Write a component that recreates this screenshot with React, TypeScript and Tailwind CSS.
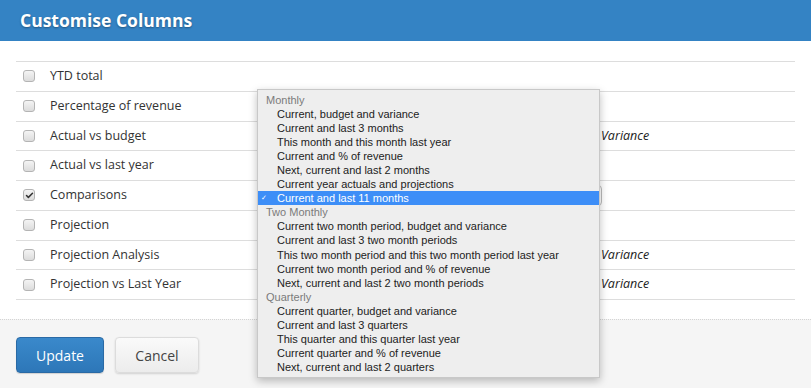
import { Check } from 'lucide-react';

interface ColumnRow {
  label: string;
  checked?: boolean;
  value?: string;
  select?: boolean;
}

const rows: ColumnRow[] = [
  { label: 'YTD total' },
  { label: 'Percentage of revenue' },
  { label: 'Actual vs budget', value: 'Variance' },
  { label: 'Actual vs last year' },
  { label: 'Comparisons', checked: true, select: true },
  { label: 'Projection' },
  { label: 'Projection Analysis', value: 'Variance' },
  { label: 'Projection vs Last Year', value: 'Variance' },
];

interface OptionGroup {
  title: string;
  options: string[];
}

const groups: OptionGroup[] = [
  {
    title: 'Monthly',
    options: [
      'Current, budget and variance',
      'Current and last 3 months',
      'This month and this month last year',
      'Current and % of revenue',
      'Next, current and last 2 months',
      'Current year actuals and projections',
      'Current and last 11 months',
    ],
  },
  {
    title: 'Two Monthly',
    options: [
      'Current two month period, budget and variance',
      'Current and last 3 two month periods',
      'This two month period and this two month period last year',
      'Current two month period and % of revenue',
      'Next, current and last 2 two month periods',
    ],
  },
  {
    title: 'Quarterly',
    options: [
      'Current quarter, budget and variance',
      'Current and last 3 quarters',
      'This quarter and this quarter last year',
      'Current quarter and % of revenue',
      'Next, current and last 2 quarters',
    ],
  },
];

const selected = 'Current and last 11 months';

function Checkbox({ checked = false }: { checked?: boolean }) {
  return (
    <span className="flex h-[12px] w-[12px] items-center justify-center rounded-[3px] border border-[#b4b4b4] bg-gradient-to-b from-[#f4f4f4] to-[#dcdcdc]">
      {checked && <Check className="h-[9px] w-[9px] text-[#333]" strokeWidth={4} />}
    </span>
  );
}

export default function App() {
  return (
    <div className="relative h-[388px] w-[811px] overflow-hidden bg-white font-['Open_Sans',sans-serif] text-[#333]">
      {/* Header */}
      <div className="flex h-[41px] items-center bg-[#3483c4] px-[20px]">
        <h1 className="text-[17.5px] font-bold text-white [text-shadow:0_1px_2px_rgba(0,0,0,0.35)]">
          Customise Columns
        </h1>
      </div>

      {/* Column list */}
      <div className="px-[16px] pt-[20px]">
        {rows.map((row) => (
          <div
            key={row.label}
            className="flex h-[29.75px] items-center border-t border-[#dddddd] text-[12.5px]"
          >
            <div className="flex w-[34px] pl-[7px]">
              <Checkbox checked={row.checked} />
            </div>
            <div className="flex w-[551px] items-center justify-between">
              <span>{row.label}</span>
              {row.select && (
                <div className="mr-[-1px] h-[21px] w-[182px] rounded-[4px] border border-[#bbb] bg-white" />
              )}
            </div>
            <div className="flex-1">
              {row.value && <span className="italic text-[#222]">{row.value}</span>}
            </div>
          </div>
        ))}
        <div className="border-t border-[#dddddd]" />
      </div>

      {/* Footer */}
      <div className="mt-[19px] flex h-[70px] gap-[11px] border-t border-dotted border-[#d4d4d4] bg-[#f5f5f5] px-[16px] pt-[17px]">
        <button className="h-[36px] w-[88px] rounded-[4px] border border-[#2a6aa5] bg-gradient-to-b from-[#3a89cb] to-[#2d77b8] text-[14px] text-white shadow-[0_1px_1px_rgba(0,0,0,0.15)]">
          Update
        </button>
        <button className="h-[36px] w-[84px] rounded-[4px] border border-[#dcdcdc] bg-gradient-to-b from-[#fafafa] to-[#ececec] text-[14px] text-[#444] shadow-[0_1px_2px_rgba(0,0,0,0.15)]">
          Cancel
        </button>
      </div>

      {/* Native select popup */}
      <div className="absolute left-[257px] top-[89px] w-[343px] border border-[#c8c8c8] bg-[#eeeeee] py-[2.5px] font-['Liberation_Sans',Arial,sans-serif] text-[11px] leading-[14.1px] text-[#222] shadow-[0_3px_8px_rgba(0,0,0,0.25)]">
        {groups.map((group) => (
          <div key={group.title}>
            <div className="h-[14.1px] pl-[8px] text-[#7b7b7b]">{group.title}</div>
            {group.options.map((opt) =>
              opt === selected ? (
                <div key={opt} className="relative h-[14.1px] bg-[#3d8ef7] pl-[19px] text-white">
                  <span className="absolute left-[3px] top-0 text-[7px]">✓</span>
                  {opt}
                </div>
              ) : (
                <div key={opt} className="h-[14.1px] pl-[19px]">
                  {opt}
                </div>
              ),
            )}
          </div>
        ))}
      </div>
    </div>
  );
}
